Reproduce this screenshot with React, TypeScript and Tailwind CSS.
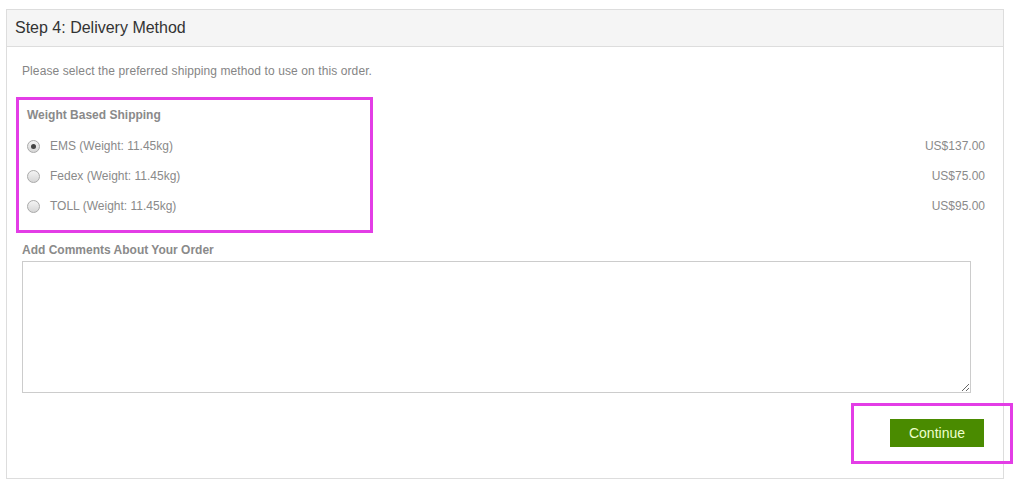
const rows = [
  { name: "EMS", price: "US$137.00", checked: true },
  { name: "Fedex", price: "US$75.00", checked: false },
  { name: "TOLL", price: "US$95.00", checked: false },
];

const Radio = ({ checked }: { checked: boolean }) => {
  return (
    <span className="w-[13px] h-[13px] rounded-full border border-[#a9a9a9] bg-gradient-to-b from-[#f4f4f4] to-[#d6d6d6] flex items-center justify-center">
      {checked && <span className="w-[5px] h-[5px] rounded-full bg-[#444]" />}
    </span>
  );
};

const App = () => {
  return (
    <div className="relative w-[1019px] h-[487px] bg-white pl-[6px] pt-[9px] font-['Liberation_Sans',Arial,sans-serif]">
      <div className="w-[998px] h-[470px] border border-[#dddddd] flex flex-col">
        <div className="h-[37px] bg-[#f5f5f5] border-b border-[#dddddd] px-[8px] flex items-center">
          <h3 className="text-[16px] text-[#333333]">Step 4: Delivery Method</h3>
        </div>
        <div className="pl-[15px] pt-[16px]">
          <p className="text-[12px] leading-[16px] tracking-[0.1px] text-[#858585]">
            Please select the preferred shipping method to use on this order.
          </p>
          <div className="mt-[28px] pl-[5px] pr-[18px]">
            <div className="text-[12px] leading-[16px] font-bold text-[#8a8a8a]">Weight Based Shipping</div>
            <div className="mt-[8px]">
              {rows.map((r) => (
                <div key={r.name} className="h-[30px] flex items-center text-[12px] text-[#8a8a8a]">
                  <Radio checked={r.checked} />
                  <span className="ml-[10px]">{r.name} (Weight: 11.45kg)</span>
                  <span className="ml-auto">{r.price}</span>
                </div>
              ))}
            </div>
          </div>
          <div className="mt-[21px] text-[12px] leading-[16px] font-bold text-[#8a8a8a]">
            Add Comments About Your Order
          </div>
          <div className="mt-[3px] pr-[32px]">
            <textarea className="block w-full h-[132px] border border-[#cccccc] outline-none" />
          </div>
          <div className="mt-[26px] pr-[19px] flex justify-end">
            <button className="h-[28px] w-[94px] bg-[#4a8b00] text-[#eeffcc] text-[14px]">Continue</button>
          </div>
        </div>
      </div>
      <div className="absolute left-[16px] top-[97px] w-[357px] h-[136px] border-[3px] border-[#e33de6]" />
      <div className="absolute left-[851px] top-[403px] w-[162px] h-[61px] border-[3px] border-[#e33de6]" />
    </div>
  );
};

export default App;
